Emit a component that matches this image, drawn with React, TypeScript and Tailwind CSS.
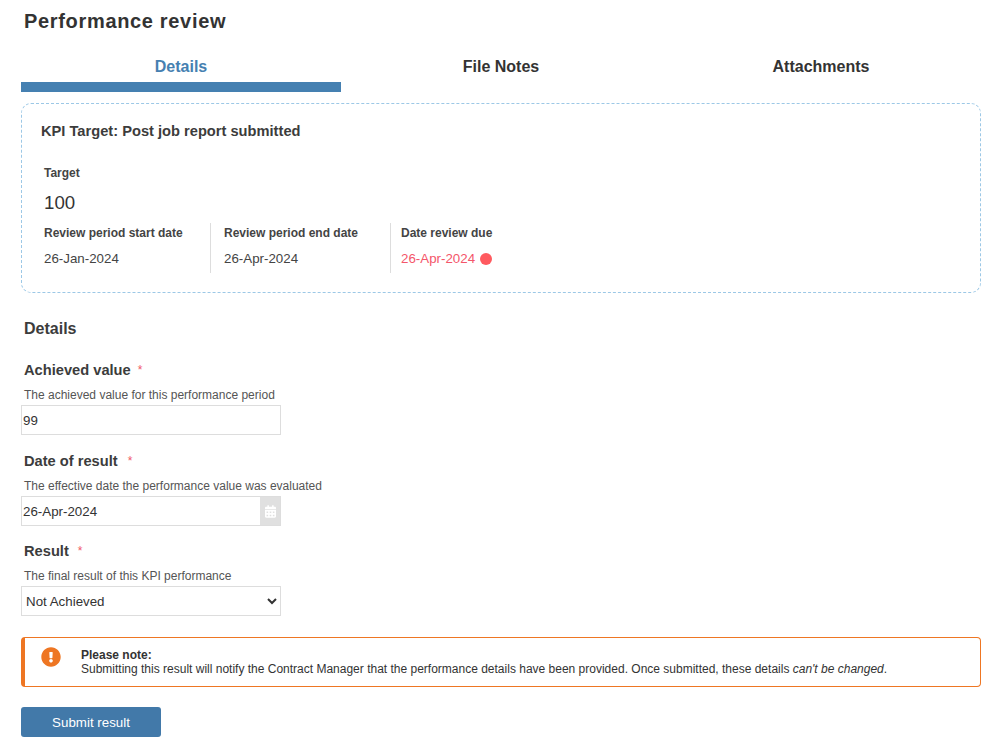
import { FaCalendarAlt, FaExclamationCircle } from 'react-icons/fa';

const font = { arial: '[font-family:"Liberation_Sans",Arial,sans-serif]' };

const tabs = ['Details', 'File Notes', 'Attachments'];

const Label = ({ text, gap }: { text: string; gap: string }) => (
  <div className="flex h-[18px] items-center text-[14.67px] font-bold leading-[18px] text-[#3c3c3c]">
    <span>{text}</span>
    <span className={`${gap} text-[12px] font-normal text-[#f0596a]`}>*</span>
  </div>
);

const Hint = ({ text }: { text: string }) => (
  <p className="mt-[9px] text-[12px] leading-[14px] text-[#555]">{text}</p>
);

const App = () => {
  return (
    <div className={`${font.arial} h-[748px] w-[1007px] overflow-hidden bg-white px-[21px] text-[#333]`}>
      <h1 className="ml-[3px] pt-[9px] text-[20px] font-bold leading-[24px] tracking-[0.67px] text-[#333]">
        Performance review
      </h1>

      <div className="mt-[17px] flex w-[960px]">
        {tabs.map((tab, i) => (
          <div
            key={tab}
            className={`h-[42px] w-[320px] pt-[8px] text-center text-[16px] font-bold leading-[18px] ${
              i === 0 ? 'border-b-[10px] border-[#4580b1] text-[#4580b1]' : 'text-[#333]'
            }`}
          >
            {tab}
          </div>
        ))}
      </div>

      <section className="mt-[11px] h-[190px] w-[960px] rounded-[10px] border border-dashed border-[#9cc8e6] pl-[19px] pt-[19px]">
        <h2 className="text-[14.67px] font-bold leading-[17px] text-[#3c3c3c]">KPI Target: Post job report submitted</h2>
        <div className="ml-[3px] mt-[26px] text-[12px] font-bold leading-[14px] text-[#444]">Target</div>
        <div className="ml-[3px] mt-[11px] text-[18.67px] leading-[23px] text-[#333]">100</div>
        <div className="ml-[3px] mt-[9px] flex h-[50px] text-[12px] leading-[14px]">
          <div className="w-[167px] border-r border-[#ddd]">
            <div className="pt-[3px] font-bold text-[#444]">Review period start date</div>
            <div className="mt-[12px] text-[13.33px] text-[#444]">26-Jan-2024</div>
          </div>
          <div className="w-[180px] border-r border-[#ddd] pl-[13px]">
            <div className="pt-[3px] font-bold text-[#444]">Review period end date</div>
            <div className="mt-[12px] text-[13.33px] text-[#444]">26-Apr-2024</div>
          </div>
          <div className="pl-[10px]">
            <div className="pt-[3px] font-bold text-[#444]">Date review due</div>
            <div className="mt-[12px] flex items-center gap-[5px] text-[13.33px] text-[#f4566a]">
              26-Apr-2024
              <span className="h-[12px] w-[12px] rounded-full bg-[#ff5a5f]" />
            </div>
          </div>
        </div>
      </section>

      <h2 className="ml-[3px] mt-[27px] text-[16px] font-bold leading-[17px] text-[#3c3c3c]">Details</h2>

      <div className="mt-[24px] ml-[3px]">
        <Label text="Achieved value" gap="ml-[7px]" />
        <Hint text="The achieved value for this performance period" />
      </div>
      <input
        defaultValue="99"
        className="mt-[3px] block h-[30px] w-[260px] border border-[#ddd] px-[1px] text-[13.33px] text-[#333] outline-none"
      />

      <div className="mt-[17px] ml-[3px]">
        <Label text="Date of result" gap="ml-[10px]" />
        <Hint text="The effective date the performance value was evaluated" />
      </div>
      <div className="mt-[3px] flex h-[30px] w-[260px] border border-[#ddd]">
        <input
          defaultValue="26-Apr-2024"
          className="h-full min-w-0 flex-1 px-[1px] text-[13.33px] text-[#333] outline-none"
        />
        <span className="flex w-[20px] items-center justify-center bg-[#e0e0e0]">
          <FaCalendarAlt className="h-[13px] w-[11px] text-white" />
        </span>
      </div>

      <div className="mt-[16px] ml-[3px]">
        <Label text="Result" gap="ml-[9px]" />
        <Hint text="The final result of this KPI performance" />
      </div>
      <select
        defaultValue="Not Achieved"
        className="mt-[3px] block h-[30px] w-[260px] border border-[#ddd] bg-white text-[13.33px] text-[#333] outline-none"
      >
        <option>Not Achieved</option>
        <option>Achieved</option>
      </select>

      <div className="mt-[21px] flex h-[50px] w-[960px] rounded-[4px] border border-l-[4px] border-[#ee7623]">
        <FaExclamationCircle className="ml-[16px] mt-[9px] h-[20px] w-[20px] shrink-0 text-[#ee7623]" />
        <div className="ml-[20px] pt-[10px] text-[12px] leading-[14px] text-[#333]">
          <div className="font-bold">Please note:</div>
          <div>
            Submitting this result will notify the Contract Manager that the performance details have been provided.
            Once submitted, these details <em>can't be changed</em>.
          </div>
        </div>
      </div>

      <button
        type="button"
        className="mt-[20px] block h-[30px] w-[140px] rounded-[3px] bg-[#4279a9] pt-[1px] text-[13.33px] font-normal text-white"
      >
        Submit result
      </button>
    </div>
  );
};

export default App;
